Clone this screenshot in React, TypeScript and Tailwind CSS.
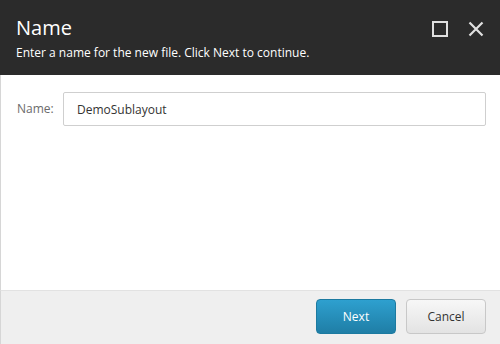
export default function App() {
    return (
        <div
            className="w-[500px] h-[344px] flex flex-col bg-white overflow-hidden"
            style={{ fontFamily: '"Open Sans", "Noto Sans", sans-serif' }}
        >
            {/* Header */}
            <div className="h-[75px] shrink-0 bg-[#2b2b2b] flex items-start justify-between pl-4 pr-4">
                <div className="flex flex-col pt-[14px]">
                    <h1 className="text-[20px] leading-[28px] text-white">Name</h1>
                    <p className="text-[12px] leading-[16px] text-white mt-[3px]">
                        Enter a name for the new file. Click Next to continue.
                    </p>
                </div>
                <div className="flex items-center gap-[20px] pt-[21px] pr-[0px]">
                    <div className="w-[16px] h-[16px] border-2 border-[#e0e0e0]" />
                    <svg width="16" height="16" viewBox="0 0 16 16">
                        <path d="M1.5 1.5 L14.5 14.5 M14.5 1.5 L1.5 14.5" stroke="#e0e0e0" strokeWidth="2.2" />
                    </svg>
                </div>
            </div>

            {/* Body */}
            <div className="flex-1 border-l border-[#d6d6d6] pt-[17px] pr-[14px] pl-[16px]">
                <div className="flex items-center">
                    <label className="text-[12px] text-[#6b6b6b] w-[46px]">Name:</label>
                    <input
                        className="flex-1 h-[34px] border border-[#cfcfcf] rounded-[2px] px-[13px] text-[12px] text-[#333] outline-none"
                        defaultValue="DemoSublayout"
                        style={{ fontFamily: 'inherit' }}
                    />
                </div>
            </div>

            {/* Footer */}
            <div className="h-[54px] shrink-0 bg-[#efefef] border-t border-[#e2e2e2] border-l border-l-[#d6d6d6] flex items-start justify-end gap-[10px] pt-[8px] pr-[14px]">
                <button className="w-[80px] h-[35px] rounded-[4px] border border-[#1c7aa0] bg-gradient-to-b from-[#2ea0cf] to-[#1f7ea6] text-white text-[12px]">
                    Next
                </button>
                <button className="w-[80px] h-[35px] rounded-[4px] border border-[#c8c8c8] bg-gradient-to-b from-[#f7f7f7] to-[#e3e3e3] text-[#333] text-[12px]">
                    Cancel
                </button>
            </div>
        </div>
    );
}
